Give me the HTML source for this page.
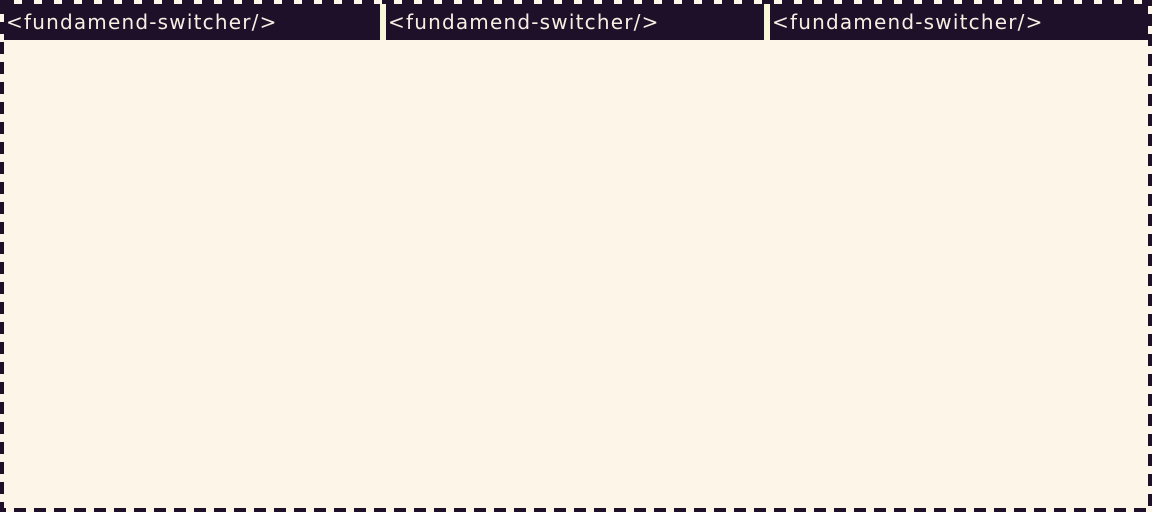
<!DOCTYPE html>
<html><head><meta charset="utf-8"><style>
html,body{margin:0;padding:0;}
body{width:1152px;height:512px;overflow:hidden;background:#fdf5e8;position:relative;}
.bar{position:absolute;top:4px;height:36px;background:#1d1028;color:#f7efe4;font-family:"DejaVu Sans","Liberation Sans",sans-serif;font-size:20px;letter-spacing:1.2px;line-height:36px;padding-left:2px;box-sizing:border-box;white-space:nowrap;overflow:hidden;}
.sep{position:absolute;top:4px;height:36px;width:6px;background:#f8f7d8;}
svg{position:absolute;left:0;top:0;}
</style></head><body>
<div class="bar" style="left:4px;width:376px">&lt;fundamend-switcher/&gt;</div>
<div class="sep" style="left:380px"></div>
<div class="bar" style="left:386px;width:378px">&lt;fundamend-switcher/&gt;</div>
<div class="sep" style="left:764px"></div>
<div class="bar" style="left:770px;width:378px">&lt;fundamend-switcher/&gt;</div>
<svg width="1152" height="512"><rect x="2" y="2" width="1148" height="508" fill="none" stroke="#1d1028" stroke-width="4" stroke-dasharray="12 8"/></svg>
</body></html>
